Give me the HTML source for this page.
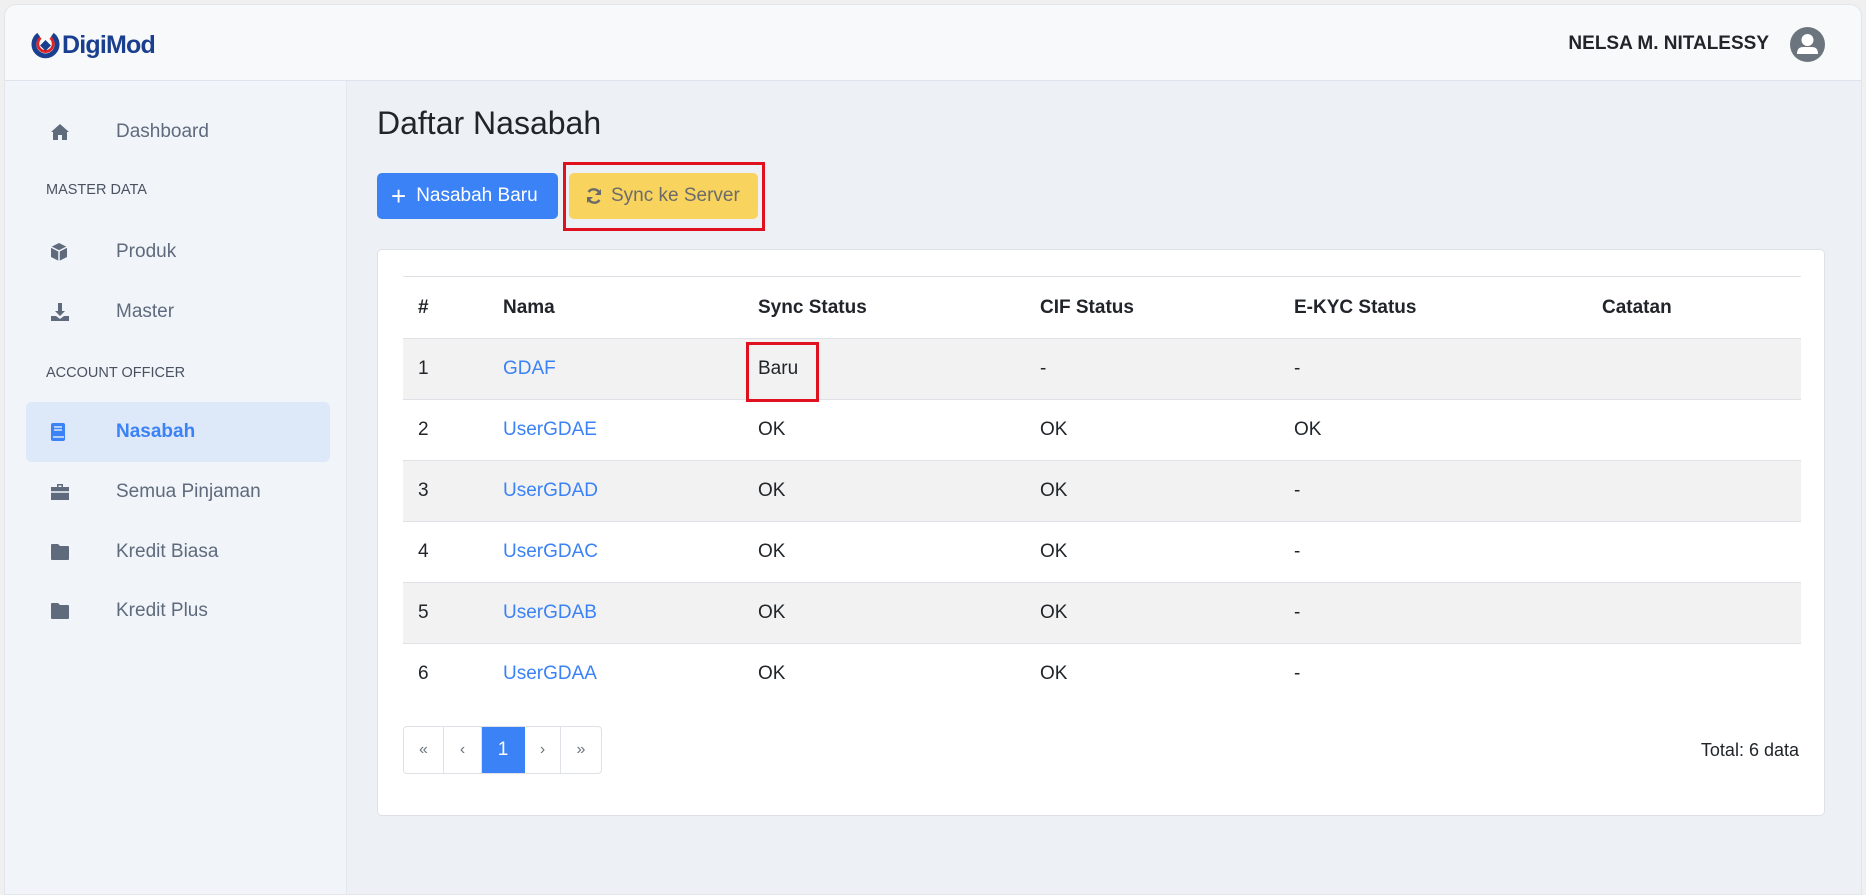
<!DOCTYPE html>
<html><head><meta charset="utf-8"><style>
*{box-sizing:border-box;margin:0;padding:0}
body{width:1866px;height:895px;background:#f0f0f0;font-family:"Liberation Sans",sans-serif;position:relative;overflow:hidden;color:#212529}
.frame{position:absolute;left:4px;top:4px;width:1858px;height:891px;border-radius:12px 12px 0 0;background:#edf1f6;overflow:hidden;border:1px solid #e2e5ea}
.hdr{position:absolute;left:0;top:0;width:100%;height:76px;background:#f8f9fb;border-bottom:1px solid #dde3ec}
.logo{position:absolute;left:26px;top:26px;display:flex;align-items:center;font-weight:bold;font-size:25px;color:#1b3f8f;letter-spacing:-0.8px}
.user{position:absolute;right:92px;top:28px;font-weight:bold;font-size:19px;color:#212529}
.av{position:absolute;right:36px;top:22px;width:35px;height:35px;border-radius:50%;background:#6c757d;overflow:hidden}
.side{position:absolute;left:0;top:76px;width:342px;height:820px;background:#f1f4f9;border-right:1px solid #e3e7ee}
.it{position:absolute;left:21px;width:304px;height:60px;display:flex;align-items:center;font-size:19px;color:#5f6b7c}
.it svg{position:absolute;left:24px}
.it span{position:absolute;left:90px}
.it.act{background:#dde8f8;border-radius:6px;color:#3b82f6;font-weight:bold}
.sec{position:absolute;left:41px;font-size:14.5px;color:#4a5260}
h1{position:absolute;left:372px;top:100px;font-size:32px;font-weight:normal;color:#212529}
.btn{position:absolute;top:168px;height:46px;border-radius:5px;font-size:19px;display:flex;align-items:center}
.card{position:absolute;left:372px;top:244px;width:1448px;height:567px;background:#fff;border:1px solid #dde1e6;border-radius:5px}
table{position:absolute;left:25px;top:26px;width:1398px;border-collapse:collapse;font-size:19px}
td,th{height:61px;text-align:left;padding-left:15px;border-top:1px solid #dee2e6;font-weight:normal}
th{font-weight:bold;height:62px}
tr.s td{background:#f2f2f2}
a{color:#3b82f6;text-decoration:none}
.pg{position:absolute;left:25px;top:476px;display:flex;height:48px;border:1px solid #dee2e6;border-radius:4px;overflow:hidden}
.pg div{height:46px;display:flex;align-items:center;justify-content:center;color:#6c757d;font-size:16px;border-right:1px solid #dee2e6}
</style></head><body>
<div class="frame">
<div class="hdr">
 <div class="logo"><svg width="29" height="27" viewBox="0 0 30 28"><path d="M8 3 A12 12 0 1 0 22 3" fill="none" stroke="#1b3f8f" stroke-width="5"/><path d="M10 6 A8 8 0 1 0 20 6" fill="none" stroke="#e02424" stroke-width="3"/><rect x="11" y="10" width="8" height="8" transform="rotate(45 15 14)" fill="#1b3f8f"/></svg><span style="margin-left:2px">DigiMod</span></div>
 <div class="user">NELSA M. NITALESSY</div>
 <div class="av"><svg width="35" height="35" viewBox="0 0 35 35"><circle cx="17.5" cy="13" r="6" fill="#fff"/><path d="M7 27 Q7 20 13 20 L22 20 Q28 20 28 27 Z" fill="#fff"/></svg></div>
</div>
<div class="side">
 <div class="it" style="top:21px"><svg width="20" height="18" viewBox="0 0 20 18"><path d="M10 1 L19 9 L17 9 L17 17 L12 17 L12 12 L8 12 L8 17 L3 17 L3 9 L1 9 Z" fill="#5f6b7c"/></svg><span>Dashboard</span></div>
 <div class="sec" style="top:101px">MASTER DATA</div>
 <div class="it" style="top:141px"><svg width="18" height="20" viewBox="0 0 18 20"><path d="M9 1 L17 5 L17 15 L9 19 L1 15 L1 5 Z" fill="#5f6b7c"/><path d="M1 5 L9 9 L17 5 M9 9 L9 19" stroke="#f1f4f9" stroke-width="1.5" fill="none"/></svg><span>Produk</span></div>
 <div class="it" style="top:201px"><svg width="20" height="20" viewBox="0 0 20 20"><path d="M8 1 H12 V9 H15 L10 14 L5 9 H8 Z" fill="#5f6b7c"/><path d="M1 14 H6 L10 17 L14 14 H19 V19 H1 Z" fill="#5f6b7c"/></svg><span>Master</span></div>
 <div class="sec" style="top:284px">ACCOUNT OFFICER</div>
 <div class="it act" style="top:321px"><svg width="16" height="20" viewBox="0 0 16 20"><rect x="1" y="1" width="14" height="18" rx="2" fill="#3b82f6"/><path d="M4 5 H12 M4 8 H12 M3 15 H14" stroke="#dde8f8" stroke-width="1.5"/></svg><span>Nasabah</span></div>
 <div class="it" style="top:381px"><svg width="20" height="18" viewBox="0 0 20 18"><path d="M7 1 H13 V4 H19 V17 H1 V4 H7 Z M8.5 2.5 V4 H11.5 V2.5 Z" fill="#5f6b7c" fill-rule="evenodd"/><path d="M1 9 H19" stroke="#f1f4f9" stroke-width="1.5"/></svg><span>Semua Pinjaman</span></div>
 <div class="it" style="top:441px"><svg width="20" height="18" viewBox="0 0 20 18"><path d="M1 2 Q1 1 2 1 H8 L10 3 H18 Q19 3 19 4 V16 Q19 17 18 17 H2 Q1 17 1 16 Z" fill="#5f6b7c"/></svg><span>Kredit Biasa</span></div>
 <div class="it" style="top:500px"><svg width="20" height="18" viewBox="0 0 20 18"><path d="M1 2 Q1 1 2 1 H8 L10 3 H18 Q19 3 19 4 V16 Q19 17 18 17 H2 Q1 17 1 16 Z" fill="#5f6b7c"/></svg><span>Kredit Plus</span></div>
</div>
<h1>Daftar Nasabah</h1>
<div class="btn" style="left:372px;width:181px;background:#3b82f6;color:#fff"><span style="font-size:26px;margin:0 10px 0 14px;line-height:1">+</span>Nasabah Baru</div>
<div class="btn" style="left:564px;width:189px;background:#f8d35e;color:#6b6b6b"><svg style="margin:0 8px 0 16px" width="18" height="18" viewBox="0 0 18 18"><path d="M15 7 A6.5 6.5 0 0 0 3.5 5 M3 11 A6.5 6.5 0 0 0 14.5 13" stroke="#6b6b6b" stroke-width="2.4" fill="none"/><path d="M16 2 V8 H10 Z M2 16 V10 H8 Z" fill="#6b6b6b"/></svg>Sync ke Server</div>
<div style="position:absolute;left:558px;top:157px;width:202px;height:69px;border:3px solid #e0101e"></div>
<div class="card">
<table>
<tr><th style="width:85px">#</th><th style="width:255px">Nama</th><th style="width:282px">Sync Status</th><th style="width:254px">CIF Status</th><th style="width:308px">E-KYC Status</th><th>Catatan</th></tr>
<tr class="s"><td>1</td><td><a>GDAF</a></td><td>Baru</td><td>-</td><td>-</td><td></td></tr>
<tr><td>2</td><td><a>UserGDAE</a></td><td>OK</td><td>OK</td><td>OK</td><td></td></tr>
<tr class="s"><td>3</td><td><a>UserGDAD</a></td><td>OK</td><td>OK</td><td>-</td><td></td></tr>
<tr><td>4</td><td><a>UserGDAC</a></td><td>OK</td><td>OK</td><td>-</td><td></td></tr>
<tr class="s"><td>5</td><td><a>UserGDAB</a></td><td>OK</td><td>OK</td><td>-</td><td></td></tr>
<tr><td>6</td><td><a>UserGDAA</a></td><td>OK</td><td>OK</td><td>-</td><td></td></tr>
</table>
<div class="pg"><div style="width:40px">«</div><div style="width:38px">‹</div><div style="width:43px;background:#3b82f6;color:#fff;font-size:19px;border-color:#3b82f6">1</div><div style="width:36px">›</div><div style="width:40px;border-right:none">»</div></div>
<div style="position:absolute;right:25px;top:490px;font-size:18px">Total: 6 data</div>
</div>
<div style="position:absolute;left:741px;top:337px;width:73px;height:60px;border:3px solid #e0101e"></div>
</div>
</body></html>
